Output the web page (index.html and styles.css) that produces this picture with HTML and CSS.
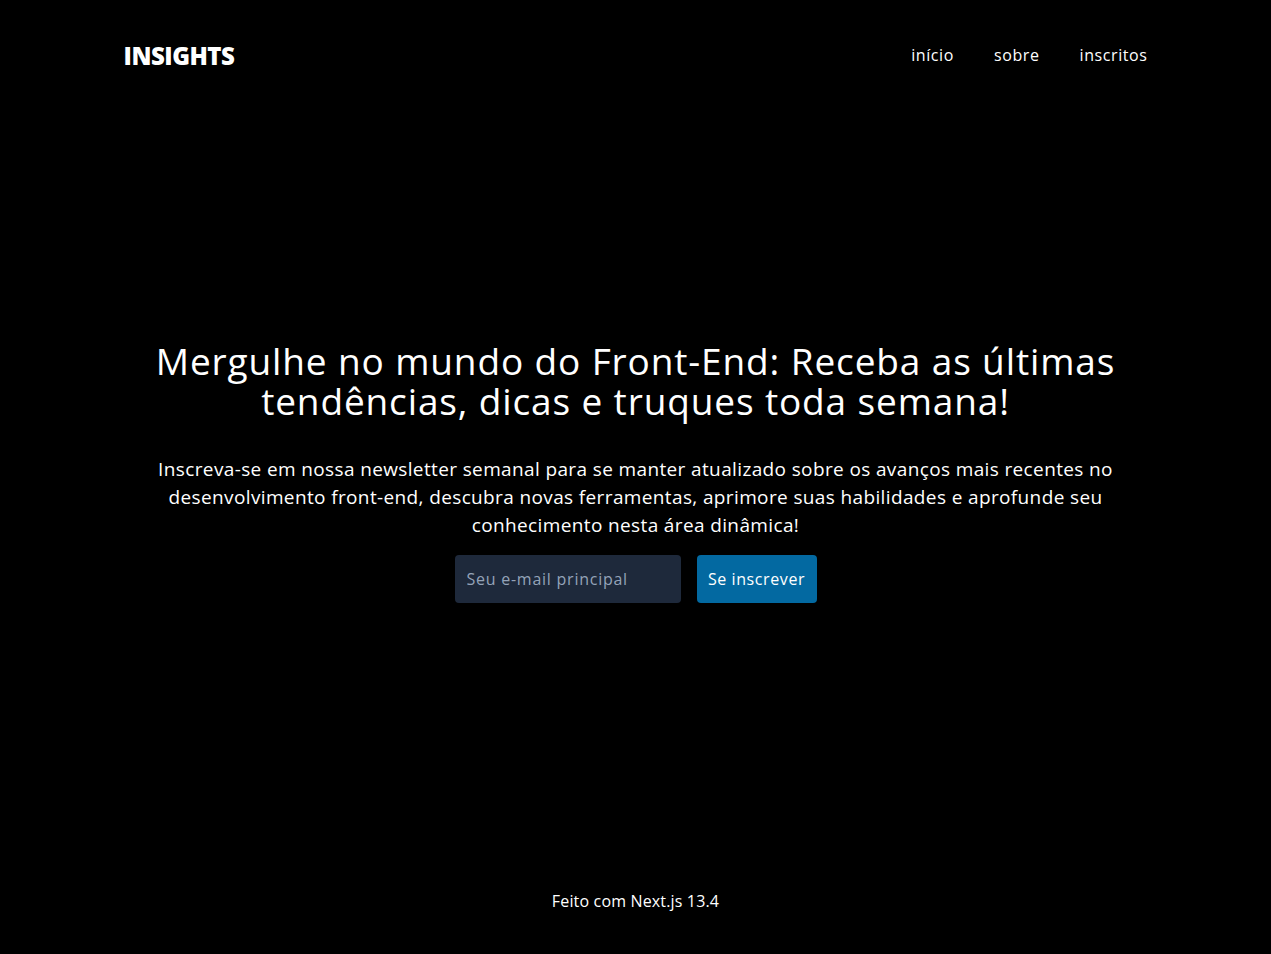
FILE: index.html
```html
<!DOCTYPE html>
<html lang="pt-BR">
<head>
<meta charset="utf-8">
<title>Insights</title>
<link rel="stylesheet" href="styles.css">
</head>
<body>
<div class="page">
  <header class="header">
    <div class="logo">INSIGHTS</div>
    <nav class="nav">
      <a href="#">início</a>
      <a href="#">sobre</a>
      <a href="#">inscritos</a>
    </nav>
  </header>
  <main class="main">
    <h1 class="title">Mergulhe no mundo do Front-End: Receba as últimas tendências, dicas e truques toda semana!</h1>
    <p class="lead">Inscreva-se em nossa newsletter semanal para se manter atualizado sobre os avanços mais recentes no desenvolvimento front-end, descubra novas ferramentas, aprimore suas habilidades e aprofunde seu conhecimento nesta área dinâmica!</p>
    <form class="form">
      <input class="email" type="email" placeholder="Seu e-mail principal">
      <button class="submit" type="button">Se inscrever</button>
    </form>
  </main>
  <footer class="footer">Feito com Next.js 13.4</footer>
</div>
</body>
</html>
```

FILE: styles.css
```css
* { box-sizing: border-box; }
html, body { margin: 0; padding: 0; background: #000; }
body {
  color: #fff;
  font-family: "Open Sans", "DejaVu Sans", sans-serif;
  letter-spacing: 0.037em;
}
.page {
  min-height: 100vh;
  display: flex;
  flex-direction: column;
  max-width: 1024px;
  margin: 0 auto;
}
.header {
  display: flex;
  justify-content: space-between;
  align-items: center;
  height: 110px;
}
.logo {
  font-size: 24px;
  font-weight: 800;
  letter-spacing: -0.02em;
}
.nav {
  display: flex;
  gap: 40px;
}
.nav a {
  color: #fff;
  text-decoration: none;
  font-size: 16px;
  line-height: 24px;
}
.main {
  flex: 1;
  display: flex;
  flex-direction: column;
  align-items: center;
  justify-content: center;
  text-align: center;
}
.title {
  margin: 0;
  font-size: 37px;
  line-height: 40px;
  font-weight: 400;
  letter-spacing: 0.87px;
  transform: translateY(-2px);
}
.lead {
  margin: 32px 0 0;
  font-size: 19px;
  line-height: 28px;
  letter-spacing: 0.37px;
}
.form {
  display: flex;
  gap: 16px;
  margin-top: 16px;
}
.email {
  width: 226px;
  height: 48px;
  background: #1e293b;
  border: none;
  border-radius: 4px;
  padding: 0 12px;
  color: #fff;
  font-family: inherit;
  letter-spacing: 0.75px;
  font-size: 16px;
  outline: none;
}
.email::placeholder { color: #94a3b8; }
.submit {
  width: 120px;
  height: 48px;
  background: #0369a1;
  color: #fff;
  border: none;
  border-radius: 4px;
  font-family: inherit;
  letter-spacing: inherit;
  font-size: 16px;
  font-weight: 500;
}
.footer {
  text-align: center;
  font-size: 16px;
  line-height: 24px;
  letter-spacing: 0.01em;
  height: 119px;
  padding-top: 54px;
}
```
